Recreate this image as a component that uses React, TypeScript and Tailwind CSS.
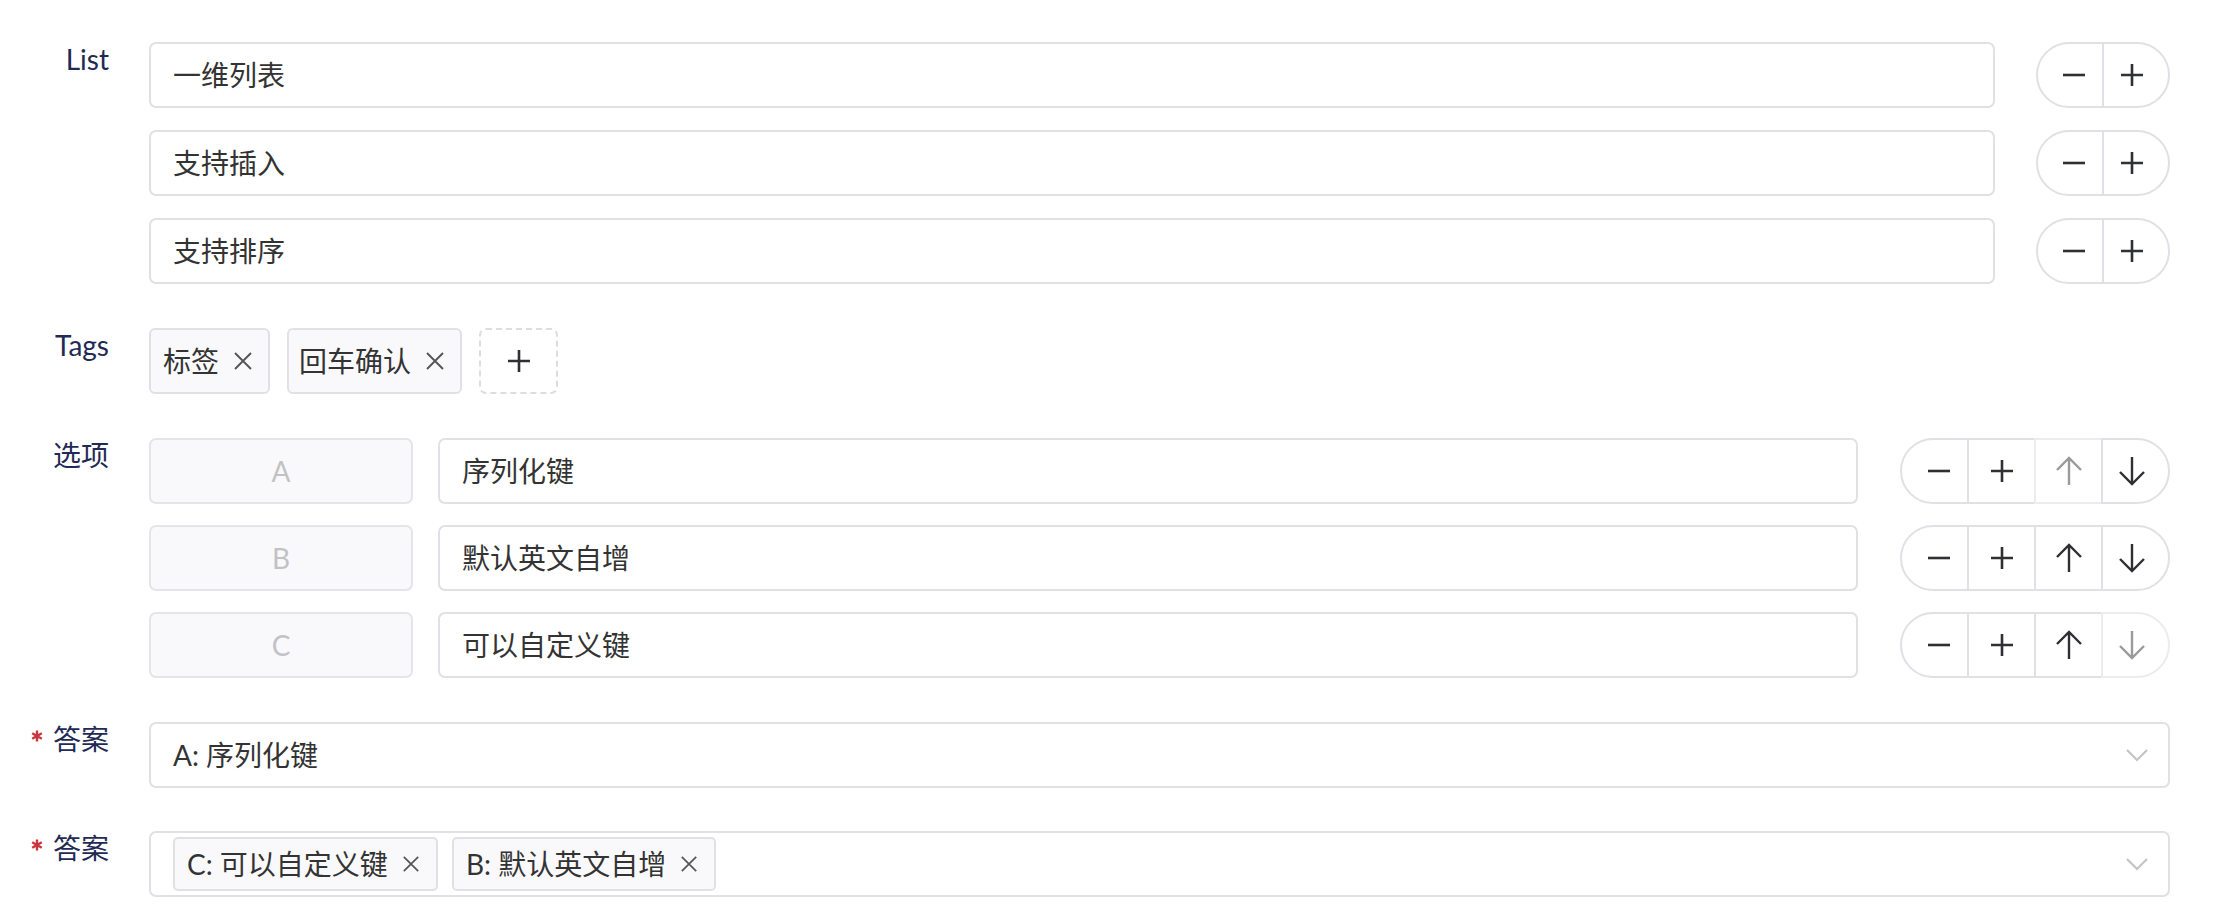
import React from "react";

const FONT = { fontFamily: '"Lato", "Noto Sans CJK SC", sans-serif' };

function Minus() {
  return (
    <svg width="24" height="24" viewBox="0 0 24 24" fill="none">
      <path d="M1 12H23" stroke="#2f3033" strokeWidth="2.6" />
    </svg>
  );
}
function Plus() {
  return (
    <svg width="24" height="24" viewBox="0 0 24 24" fill="none">
      <path d="M1 12H23M12 1V23" stroke="#2f3033" strokeWidth="2.6" />
    </svg>
  );
}
function ArrowUp({ disabled }: { disabled?: boolean }) {
  return (
    <svg width="28" height="30" viewBox="0 0 28 30" fill="none">
      <path d="M14 2V29M2 14L14 2L26 14" stroke={disabled ? "#9a9a9a" : "#2f3033"} strokeWidth="2.4" />
    </svg>
  );
}
function ArrowDown({ disabled }: { disabled?: boolean }) {
  return (
    <svg width="28" height="30" viewBox="0 0 28 30" fill="none">
      <path d="M14 1V28M2 16L14 28L26 16" stroke={disabled ? "#9a9a9a" : "#2f3033"} strokeWidth="2.4" />
    </svg>
  );
}
function Close({ size = 20 }: { size?: number }) {
  return (
    <svg width={size} height={size} viewBox="0 0 20 20" fill="none">
      <path d="M2 2L18 18M18 2L2 18" stroke="#555" strokeWidth="1.9" />
    </svg>
  );
}
function Chevron() {
  return (
    <svg width="22" height="14" viewBox="0 0 22 14" fill="none">
      <path d="M1 2L11 12L21 2" stroke="#c4c4c8" strokeWidth="2.2" />
    </svg>
  );
}
function Star() {
  return (
    <svg width="12" height="12" viewBox="0 0 12 12" fill="none">
      <path d="M6 0.5V11.5M1.2 3.2L10.8 8.8M10.8 3.2L1.2 8.8" stroke="#c9353a" strokeWidth="2.4" />
    </svg>
  );
}

type Seg = { icon: React.ReactNode; disabled?: boolean };

function Group({ segs, wide }: { segs: Seg[]; wide?: boolean }) {
  return (
    <div className="flex shrink-0">
      {segs.map((s, i) => (
        <div
          key={i}
          className={
            "flex h-[66px] items-center justify-center border-2 bg-white " +
            (wide ? "w-[69px] " : "w-[68px] ") +
            (s.disabled ? "border-[#ececf0] " : "border-[#e0e0e6] ") +
            (i === 0 ? "rounded-l-full pl-[8px] " : "-ml-[2px] ") +
            (i === segs.length - 1 ? "rounded-r-full pr-[8px] " : "")
          }
        >
          {s.icon}
        </div>
      ))}
    </div>
  );
}

function Label({ text, required }: { text: string; required?: boolean }) {
  return (
    <div className="flex w-[149px] shrink-0 justify-end pr-[40px]">
      <div className="-mt-[3px] flex h-[40px] items-center text-[28px] leading-[40px] text-[#1f2a55]">
        {required && (
          <span className="mr-[10px] -mt-[6px] flex items-center">
            <Star />
          </span>
        )}
        {text}
      </div>
    </div>
  );
}

function TextInput({ value }: { value: string }) {
  return (
    <div className="flex h-[66px] flex-1 items-center rounded-[7px] border-2 border-[#e0e0e6] bg-white pl-[22px] text-[28px] text-[#333]">
      {value}
    </div>
  );
}

export default function App() {
  const listItems = ["一维列表", "支持插入", "支持排序"];
  const options = [
    { k: "A", v: "序列化键", upDis: true, downDis: false },
    { k: "B", v: "默认英文自增", upDis: false, downDis: false },
    { k: "C", v: "可以自定义键", upDis: false, downDis: true },
  ];
  return (
    <div className="min-h-[918px] w-[2224px] bg-white pr-[54px] pt-[42px]" style={FONT}>
      {/* List */}
      <div className="flex">
        <Label text="List" />
        <div className="flex flex-1 flex-col gap-[22px]">
          {listItems.map((t) => (
            <div key={t} className="flex gap-[41px]">
              <TextInput value={t} />
              <Group segs={[{ icon: <Minus /> }, { icon: <Plus /> }]} />
            </div>
          ))}
        </div>
      </div>

      {/* Tags */}
      <div className="mt-[44px] flex">
        <Label text="Tags" />
        <div className="flex flex-1 gap-[17px]">
          <div className="flex h-[66px] items-center gap-[14px] rounded-[6px] border-2 border-[#e0e0e6] bg-[#f9f9fb] pl-[12px] pr-[15px] text-[28px] text-[#333]">
            <span>标签</span>
            <Close />
          </div>
          <div className="flex h-[66px] items-center gap-[14px] rounded-[6px] border-2 border-[#e0e0e6] bg-[#f9f9fb] pl-[10px] pr-[15px] text-[28px] text-[#333]">
            <span>回车确认</span>
            <Close />
          </div>
          <div className="flex h-[66px] w-[79px] items-center justify-center rounded-[7px] border-2 border-dashed border-[#dcdce2]">
            <Plus />
          </div>
        </div>
      </div>

      {/* 选项 */}
      <div className="mt-[44px] flex">
        <Label text="选项" />
        <div className="flex flex-1 flex-col gap-[21px]">
          {options.map((o) => (
            <div key={o.k} className="flex">
              <div className="flex h-[66px] w-[264px] shrink-0 items-center justify-center rounded-[7px] border-2 border-[#e4e4ea] bg-[#f9f9fb] text-[28px] text-[#c2c2c6]">
                {o.k}
              </div>
              <div className="ml-[25px] mr-[42px] flex flex-1">
                <TextInput value={o.v} />
              </div>
              <Group
                wide
                segs={[
                  { icon: <Minus /> },
                  { icon: <Plus /> },
                  { icon: <ArrowUp disabled={o.upDis} />, disabled: o.upDis },
                  { icon: <ArrowDown disabled={o.downDis} />, disabled: o.downDis },
                ]}
              />
            </div>
          ))}
        </div>
      </div>

      {/* 答案 single */}
      <div className="mt-[44px] flex">
        <Label text="答案" required />
        <div className="flex h-[66px] flex-1 items-center justify-between rounded-[7px] border-2 border-[#e0e0e6] bg-white pl-[22px] pr-[20px] text-[28px] text-[#333]">
          <span>A: 序列化键</span>
          <Chevron />
        </div>
      </div>

      {/* 答案 multi */}
      <div className="mt-[43px] flex">
        <Label text="答案" required />
        <div className="flex h-[66px] flex-1 items-center justify-between rounded-[7px] border-2 border-[#e0e0e6] bg-white pl-[22px] pr-[20px] text-[28px] text-[#333]">
          <div className="flex gap-[14px]">
            {["C: 可以自定义键", "B: 默认英文自增"].map((t) => (
              <div
                key={t}
                className="flex h-[54px] items-center gap-[14px] rounded-[5px] border-2 border-[#e0e0e6] bg-[#f9f9fb] pl-[12px] pr-[16px]"
              >
                <span>{t}</span>
                <Close size={18} />
              </div>
            ))}
          </div>
          <Chevron />
        </div>
      </div>
    </div>
  );
}
